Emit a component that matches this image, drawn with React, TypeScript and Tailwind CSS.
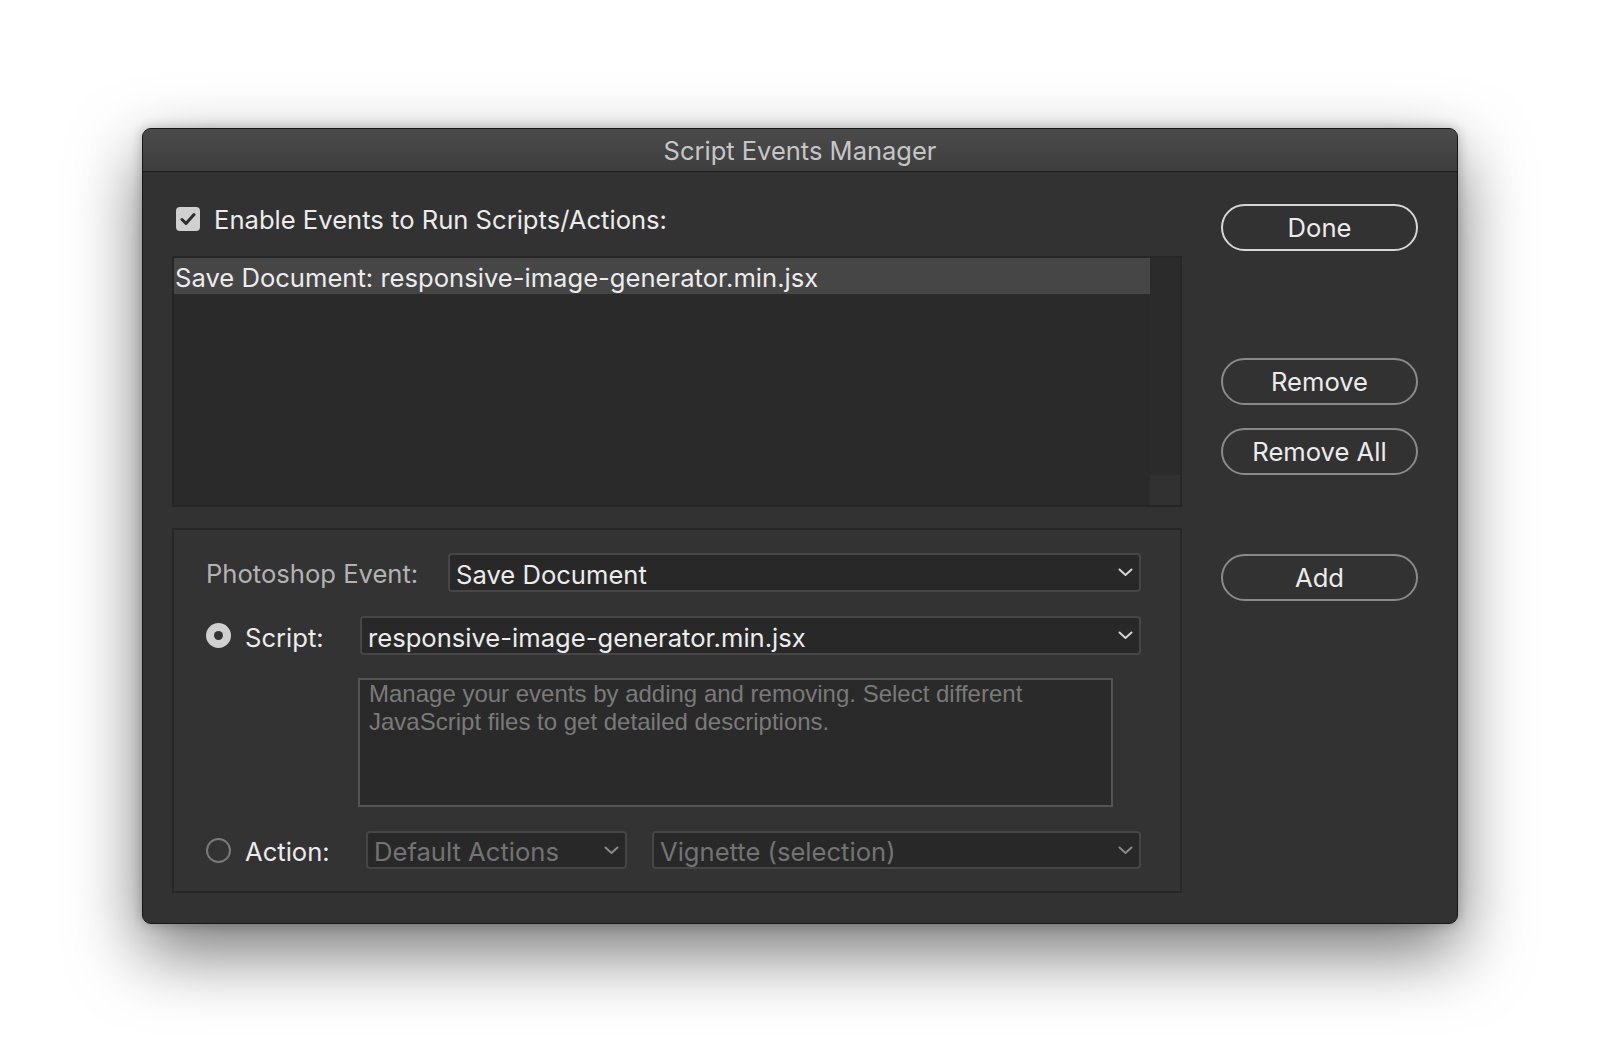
import React from "react";

const FONT = { fontFamily: "Inter, 'Noto Sans', sans-serif" };
const HELV = { fontFamily: "'Liberation Sans', Arial, sans-serif" };

function Chevron({ color }: { color: string }) {
  return (
    <svg width="15" height="9" viewBox="0 0 15 9" className="shrink-0">
      <polyline points="1.5,1.5 7.5,7 13.5,1.5" fill="none" stroke={color} strokeWidth="2" strokeLinecap="round" strokeLinejoin="round" />
    </svg>
  );
}

function Dropdown({ text, dim, className }: { text: string; dim?: boolean; className?: string }) {
  return (
    <div
      className={
        "flex items-center h-full rounded-[4px] border-2 border-[#464646] bg-[#282828] pl-[6px] pr-[6px] " +
        (className || "")
      }
    >
      <span className={"flex-1 pt-[4px] text-[25.6px] leading-none whitespace-nowrap " + (dim ? "text-[#737373]" : "text-[#ececec]")}>
        {text}
      </span>
      <Chevron color={dim ? "#8a8a8a" : "#d4d4d4"} />
    </div>
  );
}

function PillButton({ label, primary, className }: { label: string; primary?: boolean; className?: string }) {
  return (
    <div
      className={
        "h-[47px] w-[197px] rounded-full border-2 flex items-center justify-center text-[25.6px] leading-none text-[#ececec] " +
        (primary ? "border-[#d6d6d6]" : "border-[#8a8a8a]") +
        " " +
        (className || "")
      }
    >
      <span>{label}</span>
    </div>
  );
}

export default function App() {
  return (
    <div className="w-[1600px] h-[1052px] bg-white flex items-center justify-center" style={FONT}>
      <div className="w-[1316px] h-[796px] rounded-[9px] bg-[#323232] flex flex-col overflow-hidden border border-[#161616] shadow-[0_28px_70px_rgba(0,0,0,0.55),0_0_12px_rgba(0,0,0,0.25)]">
        {/* Title bar */}
        <div className="h-[43px] shrink-0 bg-gradient-to-b from-[#4b4b4b] to-[#3e3e3e] border-b border-[#1c1c1c] flex items-center justify-center">
          <span className="pt-[1px] text-[25.5px] text-[#c6c6c6] leading-none">Script Events Manager</span>
        </div>

        {/* Body */}
        <div className="flex flex-1">
          {/* Left column */}
          <div className="w-[1039px] pl-[29px] pt-[35px] flex flex-col">
            {/* Checkbox row */}
            <div className="flex items-center h-[24px] ml-[4px]">
              <div className="w-[24px] h-[24px] rounded-[4px] bg-[#d0d0d0] flex items-center justify-center">
                <svg width="16" height="14" viewBox="0 0 16 14">
                  <polyline points="2,7.5 6,11.5 14,2.5" fill="none" stroke="#2e2e2e" strokeWidth="3" strokeLinecap="round" strokeLinejoin="round" />
                </svg>
              </div>
              <span className="ml-[14px] pt-[2px] text-[25.6px] text-[#ececec] leading-none whitespace-nowrap">Enable Events to Run Scripts/Actions:</span>
            </div>

            {/* List */}
            <div className="mt-[25px] h-[251px] w-[1010px] border-2 border-[#262626] bg-[#2a2a2a] flex">
              <div className="flex-1">
                <div className="h-[36px] bg-[#464646] flex items-center pl-[1px]">
                  <span className="pt-[4px] text-[25.6px] text-[#ececec] leading-none whitespace-nowrap">
                    Save Document: responsive-image-generator.min.jsx
                  </span>
                </div>
              </div>
              <div className="w-[30px] flex flex-col">
                <div className="flex-1 bg-[#2b2b2b]" />
                <div className="h-[30px] bg-[#313131]" />
              </div>
            </div>

            {/* Group */}
            <div className="mt-[21px] h-[365px] w-[1010px] border-2 border-[#272727] bg-[#333333] pl-[32px] pr-[39px] pt-[23px] flex flex-col">
              {/* Photoshop Event */}
              <div className="flex items-center h-[39px]">
                <span className="w-[242px] pt-[2px] text-[25.6px] text-[#b2b2b2] leading-none whitespace-nowrap">Photoshop Event:</span>
                <Dropdown text="Save Document" className="flex-1" />
              </div>

              {/* Script */}
              <div className="flex items-center h-[39px] mt-[24px]">
                <div className="w-[154px] flex items-center">
                  <div className="w-[25px] h-[25px] rounded-full bg-[#d0d0d0] flex items-center justify-center">
                    <div className="w-[9px] h-[9px] rounded-full bg-[#333333]" />
                  </div>
                  <span className="ml-[14px] pt-[4px] text-[25.6px] text-[#ececec] leading-none">Script:</span>
                </div>
                <Dropdown text="responsive-image-generator.min.jsx" className="flex-1" />
              </div>

              {/* Description */}
              <div className="mt-[23px] ml-[152px] w-[755px] h-[129px] border-2 border-[#545454] bg-[#2a2a2a] px-[9px] pt-[0px]">
                <p className="text-[24px] leading-[28px] text-[#7a7a7a]" style={HELV}>
                  Manage your events by adding and removing. Select different JavaScript files to get detailed descriptions.
                </p>
              </div>

              {/* Action */}
              <div className="flex items-center h-[38px] mt-[24px]">
                <div className="w-[160px] flex items-center">
                  <div className="w-[25px] h-[25px] rounded-full border-2 border-[#7a7a7a]" />
                  <span className="ml-[14px] pt-[4px] text-[25.6px] text-[#ececec] leading-none">Action:</span>
                </div>
                <Dropdown text="Default Actions" dim className="w-[261px]" />
                <Dropdown text="Vignette (selection)" dim className="flex-1 ml-[25px]" />
              </div>
            </div>
          </div>

          {/* Right column */}
          <div className="pl-[39px] pt-[32px] flex flex-col">
            <PillButton label="Done" primary />
            <PillButton label="Remove" className="mt-[107px]" />
            <PillButton label="Remove All" className="mt-[23px]" />
            <PillButton label="Add" className="mt-[79px]" />
          </div>
        </div>
      </div>
    </div>
  );
}
